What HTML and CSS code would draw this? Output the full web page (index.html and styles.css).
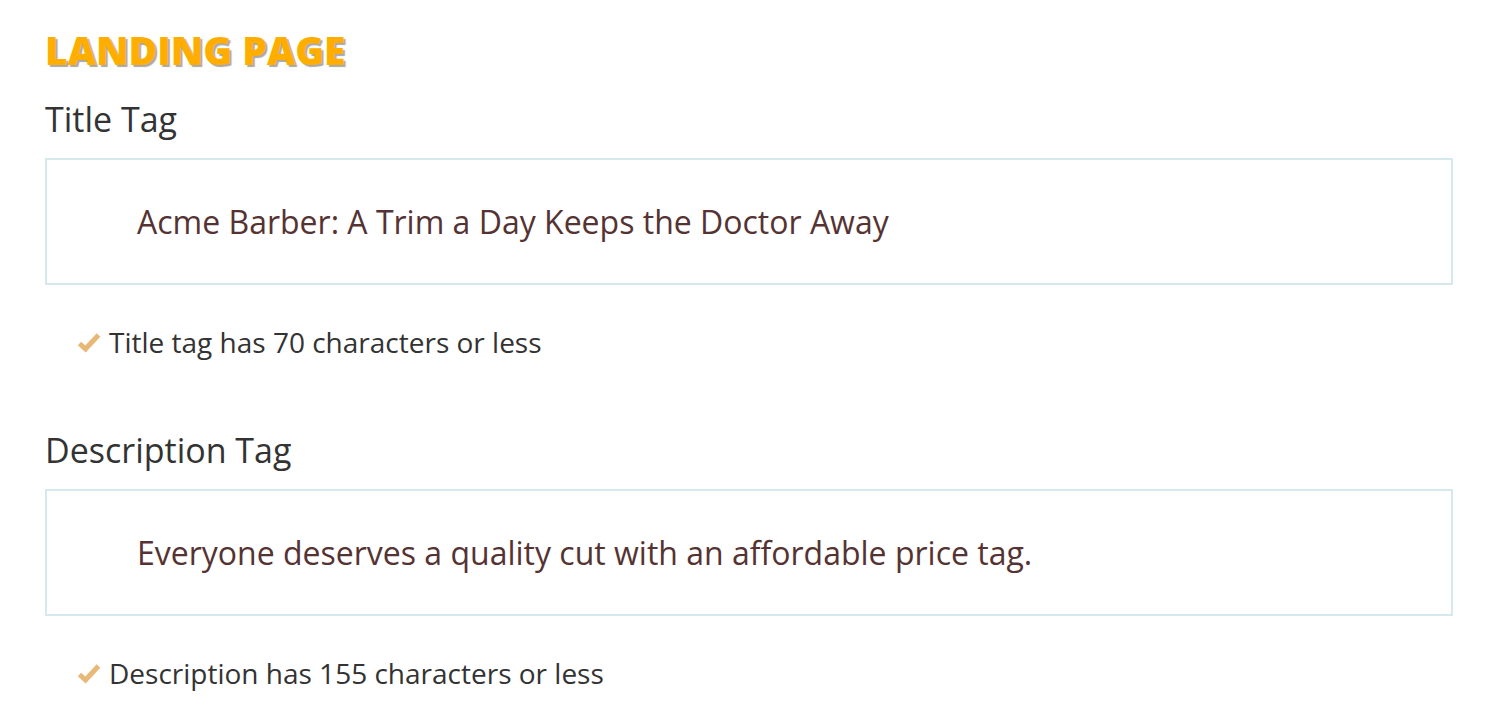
FILE: index.html
```html
<!DOCTYPE html>
<html>
<head>
<meta charset="utf-8">
<link rel="stylesheet" href="styles.css">
</head>
<body>
<main class="page">
  <h1 class="page-title">LANDING PAGE</h1>
  <section class="field">
    <h2 class="field-label">Title Tag</h2>
    <div class="field-box">Acme Barber: A Trim a Day Keeps the Doctor Away</div>
    <p class="check">
      <svg class="check-icon" viewBox="0 0 24 22" width="24" height="22"><path d="M2.5 12.5 L8.5 18 L21.5 4" fill="none" stroke="#e8b877" stroke-width="5" stroke-linejoin="miter"/></svg>
      Title tag has 70 characters or less
    </p>
  </section>
  <section class="field">
    <h2 class="field-label">Description Tag</h2>
    <div class="field-box">Everyone deserves a quality cut with an affordable price tag.</div>
    <p class="check">
      <svg class="check-icon" viewBox="0 0 24 22" width="24" height="22"><path d="M2.5 12.5 L8.5 18 L21.5 4" fill="none" stroke="#e8b877" stroke-width="5" stroke-linejoin="miter"/></svg>
      Description has 155 characters or less
    </p>
  </section>
</main>
</body>
</html>
```
FILE: styles.css
```css
html, body {
  margin: 0;
  padding: 0;
  background: #fff;
}
body {
  font-family: "Open Sans", "Liberation Sans", sans-serif;
}
.page {
  padding: 24px 45px 0 45px;
}
.page-title {
  margin: 0;
  font-size: 39px;
  font-weight: 800;
  color: #ffae00;
  line-height: 52px;
  text-shadow: 2px 2px 1px #a8a8a8;
}
.field-label {
  margin: 20px 0 0 0;
  font-size: 34px;
  font-weight: 400;
  color: #333;
  line-height: 46px;
}
.field-box {
  margin-top: 16px;
  height: 127px;
  box-sizing: border-box;
  border: 2px solid #d4e8ee;
  display: flex;
  align-items: center;
  padding-left: 90px;
  font-size: 32px;
  color: #553333;
}
.check {
  margin: 38px 0 0 32px;
  display: flex;
  align-items: center;
  gap: 8px;
  font-size: 28px;
  color: #333;
  line-height: 38px;
}
.check-icon {
  flex: none;
}
.field + .field {
  margin-top: 66px;
}
```
